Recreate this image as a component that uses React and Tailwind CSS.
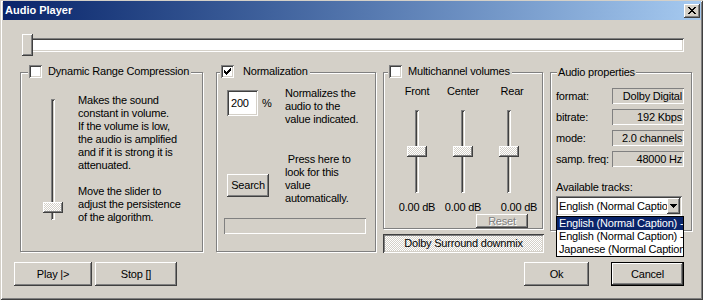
const RAISED =
  "bg-[#d4d0c8] shadow-[inset_-1px_-1px_0_#404040,inset_1px_1px_0_#fff,inset_-2px_-2px_0_#808080]";
const SUNKEN =
  "shadow-[inset_1px_1px_0_#808080,inset_-1px_-1px_0_#fff,inset_2px_2px_0_#404040,inset_-2px_-2px_0_#d4d0c8]";
const THIN_SUNKEN = "shadow-[inset_1px_1px_0_#808080,inset_-1px_-1px_0_#fff]";
const DITHER =
  "bg-[repeating-conic-gradient(#fff_0_25%,#d4d0c8_0_50%)] bg-size-[2px_2px]";
const ETCHED =
  "relative border border-[#808080] shadow-[1px_1px_0_#fff,inset_1px_1px_0_#fff]";

function Check({ checked }) {
  return (
    <div className={`w-[13px] h-[13px] bg-white flex items-center justify-center ${SUNKEN}`}>
      {checked && (
        <svg width="7" height="7" viewBox="0 0 7 7" shapeRendering="crispEdges">
          <path
            d="M0 2h1v3H0zM1 3h1v3H1zM2 4h1v3H2zM3 3h1v3H3zM4 2h1v3H4zM5 1h1v3H5zM6 0h1v3H6z"
            fill="#000"
          />
        </svg>
      )}
    </div>
  );
}

function VSlider({ h, thumbTop }) {
  return (
    <div className="relative w-[20px] flex justify-center" style={{ height: h }}>
      <div className={`w-[4px] h-full ${SUNKEN}`} />
      <div
        className={`absolute left-0 w-[20px] h-[11px] ${DITHER} shadow-[inset_-1px_-1px_0_#404040,inset_1px_1px_0_#fff,inset_-2px_-2px_0_#808080]`}
        style={{ top: thumbTop }}
      />
    </div>
  );
}

function Field({ label, value }) {
  return (
    <div className="flex items-center h-[16px] mb-[5px]">
      <div className="w-[56px] whitespace-nowrap">{label}</div>
      <div className={`w-[72px] h-[16px] flex items-center justify-end pr-[2px] whitespace-nowrap ${THIN_SUNKEN}`}>
        {value}
      </div>
    </div>
  );
}

export default function App() {
  return (
    <div className="w-[703px] h-[300px] bg-[#d4d0c8] overflow-hidden font-['Liberation_Sans',Arial,sans-serif] text-[11px] leading-[13px] text-black tracking-[-0.2px] shadow-[inset_1px_1px_0_#d4d0c8,inset_-1px_-1px_0_#404040,inset_2px_2px_0_#fff,inset_-2px_-2px_0_#808080] flex flex-col">
      {/* Title bar */}
      <div className="mt-[1px] ml-[3px] mr-[2px] h-[19px] flex items-center bg-linear-to-r from-[#0a246a] to-[#a6caf0] pl-[2px] pr-[1px]">
        <span className="text-white font-bold tracking-normal">Audio Player</span>
        <div className={`ml-auto w-[16px] h-[14px] flex items-center justify-center ${RAISED}`}>
          <svg width="8" height="7" viewBox="0 0 8 7" shapeRendering="crispEdges">
            <path
              d="M0 0h2v1H0zM6 0h2v1H6zM1 1h2v1H1zM5 1h2v1H5zM2 2h4v1H2zM3 3h2v1H3zM2 4h4v1H2zM1 5h2v1H1zM5 5h2v1H5zM0 6h2v1H0zM6 6h2v1H6z"
              fill="#000"
            />
          </svg>
        </div>
      </div>

      {/* Position slider */}
      <div className="mt-[14px] ml-[22px] w-[662px] h-[22px] relative">
        <div className={`mt-[4px] h-[14px] bg-white ${SUNKEN}`} />
        <div className={`absolute left-0 top-0 w-[11px] h-[22px] ${RAISED}`} />
      </div>

      {/* Groups */}
      <div className="mt-[16px] ml-[20px] h-[190px] flex items-start">
        {/* Group 1 */}
        <div className={`w-[183px] h-[180px] ${ETCHED}`}>
          <div className="absolute -top-[8px] left-[7px] h-[13px] flex items-center gap-[6px] pl-[1px] pr-[2px] bg-[#d4d0c8] whitespace-nowrap">
            <Check />
            <span>Dynamic Range Compression</span>
          </div>
          <div className="flex items-start">
            <div className="ml-[22px] mt-[26px]">
              <VSlider h={121} thumbTop={103} />
            </div>
            <div className="ml-[15px] mt-[21px] whitespace-nowrap">
              <div>Makes the sound</div>
              <div>constant in volume.</div>
              <div>If the volume is low,</div>
              <div>the audio is amplified</div>
              <div>and if it is strong it is</div>
              <div>attenuated.</div>
              <div className="h-[13px]" />
              <div>Move the slider to</div>
              <div>adjust the persistence</div>
              <div>of the algorithm.</div>
            </div>
          </div>
        </div>

        {/* Group 2 */}
        <div className={`ml-[13px] w-[160px] h-[180px] ${ETCHED}`}>
          <div className="absolute -top-[8px] left-[3px] h-[13px] flex items-center gap-[9px] pl-[1px] pr-[2px] bg-[#d4d0c8] whitespace-nowrap">
            <Check checked />
            <span>Normalization</span>
          </div>
          <div className="pl-[10px] pt-[14px] flex items-start">
            <div className="w-[58px] mt-[3px] h-[26px] flex items-center">
              <div className={`w-[31px] h-[26px] bg-white flex items-center pl-[4px] ${SUNKEN}`}>200</div>
              <span className="ml-[4px]">%</span>
            </div>
            <div className="whitespace-nowrap">
              <div>Normalizes the</div>
              <div>audio to the</div>
              <div>value indicated.</div>
            </div>
          </div>
          <div className="pl-[10px] mt-[27px] flex items-start">
            <div className="w-[58px] mt-[21px]">
              <div className={`w-[42px] h-[23px] flex items-center justify-center ${RAISED}`}>Search</div>
            </div>
            <div className="whitespace-nowrap">
              <div>{"\u00a0Press here to"}</div>
              <div>look for this</div>
              <div>value</div>
              <div>automatically.</div>
            </div>
          </div>
          <div className={`ml-[7px] mt-[13px] w-[142px] h-[16px] ${THIN_SUNKEN}`} />
        </div>

        {/* Group 3 + Dolby */}
        <div className="ml-[7px] w-[161px] flex flex-col">
          <div className={`w-[160px] h-[157px] ${ETCHED}`}>
            <div className="absolute -top-[8px] left-[4px] h-[13px] flex items-center gap-[6px] pl-[1px] pr-[2px] bg-[#d4d0c8] whitespace-nowrap">
              <Check />
              <span>Multichannel volumes</span>
            </div>
            <div className="pl-[10px] pt-[12px] flex">
              <div className="w-[46px] flex flex-col items-center">
                <div>Front</div>
                <div className="mt-[12px]"><VSlider h={83} thumbTop={36} /></div>
                <div className="mt-[8px] whitespace-nowrap">0.00 dB</div>
              </div>
              <div className="w-[46px] flex flex-col items-center">
                <div>Center</div>
                <div className="mt-[12px]"><VSlider h={83} thumbTop={36} /></div>
                <div className="mt-[8px] whitespace-nowrap">0.00 dB</div>
              </div>
              <div className="w-[46px] flex flex-col items-center">
                <div className="pl-[6px]">Rear</div>
                <div className="mt-[12px]"><VSlider h={83} thumbTop={36} /></div>
                <div className="mt-[8px] pl-[20px] whitespace-nowrap">0.00 dB</div>
              </div>
            </div>
            <div className={`ml-[92px] w-[52px] h-[14px] flex items-center justify-center text-[#808080] [text-shadow:1px_1px_0_#fff] ${RAISED}`}>
              Reset
            </div>
          </div>
          <div className={`mt-[5px] w-[161px] h-[19px] flex items-center justify-center ${DITHER} shadow-[inset_1px_1px_0_#404040,inset_-1px_-1px_0_#fff,inset_2px_2px_0_#808080,inset_-2px_-2px_0_#d4d0c8]`}>
            Dolby Surround downmix
          </div>
        </div>

        {/* Group 4 */}
        <div className={`ml-[6px] w-[142px] h-[159px] ${ETCHED}`}>
          <div className="absolute -top-[7px] left-[6px] h-[13px] flex items-center px-[1px] bg-[#d4d0c8] whitespace-nowrap">
            Audio properties
          </div>
          <div className="pl-[5px] pt-[15px]">
            <Field label="format:" value="Dolby Digital" />
            <Field label="bitrate:" value="192 Kbps" />
            <Field label="mode:" value="2.0 channels" />
            <Field label="samp. freq:" value="48000 Hz" />
            <div className="mt-[14px] whitespace-nowrap">Available tracks:</div>
            <div className="relative mt-[2px] w-[126px]">
              <div className={`h-[20px] bg-white flex items-center pl-[2px] pr-[2px] ${SUNKEN}`}>
                <div className="flex-1 overflow-hidden whitespace-nowrap pl-[1px]">English (Normal Caption) - CC</div>
                <div className={`w-[13px] h-[16px] flex items-center justify-center ${RAISED}`}>
                  <svg width="7" height="4" viewBox="0 0 7 4" shapeRendering="crispEdges">
                    <path d="M0 0h7v1H0zM1 1h5v1H1zM2 2h3v1H2zM3 3h1v1H3z" fill="#000" />
                  </svg>
                </div>
              </div>
              <div className="absolute left-0 top-[20px] w-[128px] border border-black bg-white z-10">
                <div className="h-[13px] bg-[#0a246a] text-white pl-[2px] whitespace-nowrap overflow-hidden">English (Normal Caption) - CC</div>
                <div className="h-[13px] pl-[2px] whitespace-nowrap overflow-hidden">English (Normal Caption) - Dir</div>
                <div className="h-[13px] pl-[2px] whitespace-nowrap overflow-hidden">Japanese (Normal Caption)</div>
              </div>
            </div>
          </div>
        </div>
      </div>

      {/* Bottom buttons */}
      <div className="pl-[14px] pr-[19px] h-[24px] flex">
        <div className={`w-[78px] h-[24px] flex items-center justify-center ${RAISED}`}>Play |&gt;</div>
        <div className={`ml-[3px] w-[82px] h-[24px] flex items-center justify-center ${RAISED}`}>Stop []</div>
        <div className={`ml-auto w-[65px] h-[24px] flex items-center justify-center ${RAISED}`}>Ok</div>
        <div className="ml-[22px] w-[73px] h-[24px] border border-black">
          <div className={`w-full h-full flex items-center justify-center ${RAISED}`}>Cancel</div>
        </div>
      </div>
    </div>
  );
}
